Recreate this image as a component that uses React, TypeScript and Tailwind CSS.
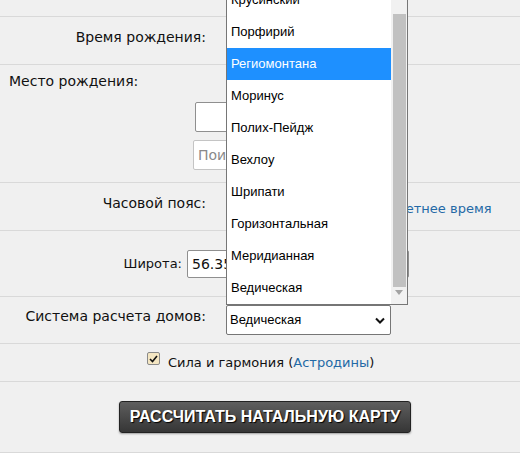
import React from "react";

const houses = [
  "Крусинский",
  "Порфирий",
  "Региомонтана",
  "Моринус",
  "Полих-Пейдж",
  "Вехлоу",
  "Шрипати",
  "Горизонтальная",
  "Меридианная",
  "Ведическая",
];

function HouseList() {
  return (
    <div className="absolute left-[226px] top-[-17px] w-[182px] h-[322px] bg-white border border-[#767676] flex font-['Liberation_Sans',Arial,sans-serif] text-[13px] text-black">
      <ul className="flex-1 flex flex-col">
        {houses.map((h) => (
          <li
            key={h}
            className={
              "h-[32px] flex items-center pl-[4px] " +
              (h === "Региомонтана" ? "bg-[#1e90ff] text-white" : "")
            }
          >
            {h}
          </li>
        ))}
      </ul>
      <div className="w-[16px] bg-[#f1f1f1] flex flex-col items-center">
        <div className="h-[30px]" />
        <div className="w-[13px] h-[273px] bg-[#c1c1c1]" />
        <div className="mt-[3px] text-[#a3a3a3]">
          <svg width="8" height="5" viewBox="0 0 8 5">
            <path d="M0 0h8L4 5z" fill="currentColor" />
          </svg>
        </div>
      </div>
    </div>
  );
}

export default function App() {
  return (
    <div className="w-[520px] min-h-[459px] bg-white font-['DejaVu_Sans',Verdana,sans-serif] text-[14px] text-[#111]">
      <div className="relative bg-[#f0f0f0]">
        {/* top row, hidden under list */}
        <div className="h-[17px] border-b border-[#d9d9d9]" />

        {/* birth time */}
        <div className="h-[48px] border-b border-[#d9d9d9] flex">
          <div className="w-[206px] text-right pt-[10px]">Время рождения:</div>
        </div>

        {/* birth place */}
        <div className="h-[118px] border-b border-[#d9d9d9] flex flex-col">
          <div className="pl-[9px] pt-[7px] leading-[18px]">Место рождения:</div>
          <input
            className="ml-[195px] mt-[12px] w-[60px] h-[30px] bg-white border border-[#8f8f8f] rounded-[2px] outline-none"
            readOnly
          />
          <input
            className="ml-[193px] mt-[8px] w-[60px] h-[30px] bg-white border border-[#c4c4c4] rounded-[2px] px-[4px] outline-none placeholder:text-[#8a8a8a]"
            placeholder="Поиск"
            readOnly
          />
        </div>

        {/* timezone */}
        <div className="h-[48px] border-b border-[#d9d9d9] flex">
          <div className="w-[206px] text-right pt-[10px]">Часовой пояс:</div>
          <a className="ml-[190px] pt-[16px] text-[13px] text-[#2369a6]">Летнее время</a>
        </div>

        {/* latitude */}
        <div className="h-[66px] border-b border-[#d9d9d9] flex items-start">
          <div className="w-[182px] text-right pt-[23px] text-[13px]">Широта:</div>
          <input
            className="ml-[5px] mt-[19px] w-[222px] h-[28px] bg-white border border-[#8f8f8f] rounded-[2px] px-[4px] outline-none"
            defaultValue="56.35"
            readOnly
          />
        </div>

        {/* house system */}
        <div className="h-[47px] border-b border-[#d9d9d9] flex items-start">
          <div className="w-[206px] text-right pt-[9px]">Система расчета домов:</div>
          <div className="ml-[20px] mt-[8px] w-[165px] h-[30px] bg-white border border-[#767676] rounded-[2px] flex items-center justify-between pl-[3px] pr-[5px] font-['Liberation_Sans',Arial,sans-serif] text-[13px] text-black">
            <span>Ведическая</span>
            <svg width="10" height="7" viewBox="0 0 10 7">
              <path d="M1 1.5l4 4 4-4" stroke="#111" strokeWidth="2" fill="none" />
            </svg>
          </div>
        </div>

        {/* astrodines */}
        <div className="h-[38px] border-b border-[#d9d9d9] flex items-start pl-[147px] text-[13px]">
          <span className="mt-[8px] w-[13px] h-[13px] bg-[#f4e6c2] border border-[#8a8a8a] rounded-[2px] flex items-center justify-center">
            <svg width="9" height="8" viewBox="0 0 9 8">
              <path d="M1 4l2.5 2.5L8 1" stroke="#111" strokeWidth="1.6" fill="none" />
            </svg>
          </span>
          <span className="ml-[8px] mt-[11px] leading-[16px]">
            Сила и гармония (<a className="text-[#2369a6]">Астродины</a>)
          </span>
        </div>

        {/* submit */}
        <div className="h-[71px] border-b border-[#d9d9d9] flex items-start">
          <button className="ml-[119px] mt-[19px] w-[292px] h-[32px] rounded-[3px] border border-[#222] bg-gradient-to-b from-[#5e5e5e] to-[#363636] shadow-[0_1px_2px_rgba(0,0,0,0.35)] text-white font-['Liberation_Sans',Arial,sans-serif] font-bold text-[16px] [text-shadow:1px_1px_1px_#000]">
            РАССЧИТАТЬ НАТАЛЬНУЮ КАРТУ
          </button>
        </div>

        <HouseList />
      </div>
    </div>
  );
}
